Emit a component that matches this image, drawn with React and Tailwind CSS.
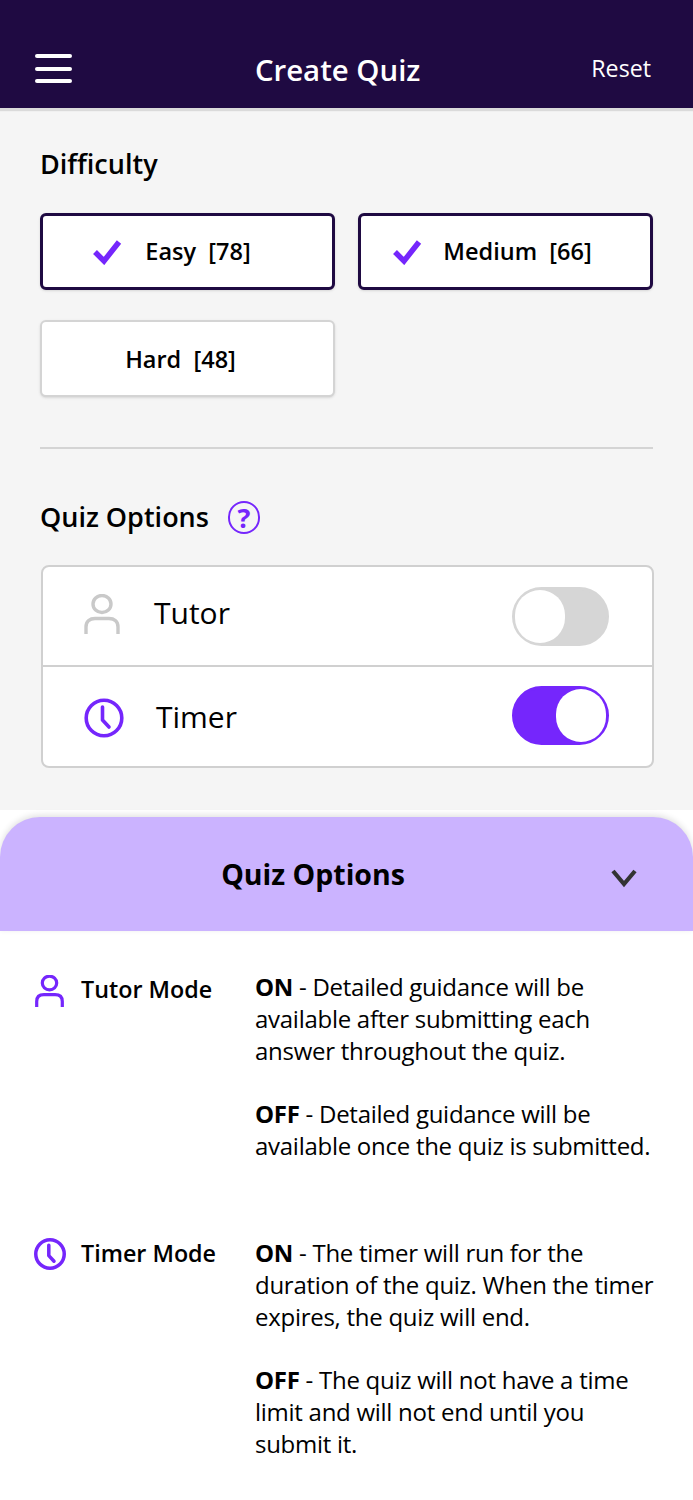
import React from "react";

const Check = () => (
  <svg width="30" height="26" viewBox="0 0 30 26" fill="none" className="shrink-0">
    <path d="M3 13 L12 22 L27 3" stroke="#7526fc" strokeWidth="5.5" strokeLinejoin="miter" />
  </svg>
);

const Person = ({ color, w = 36, h = 40, sw = 3.4 }) => (
  <svg width={w} height={h} viewBox="0 0 36 40" fill="none" className="shrink-0">
    <ellipse cx="18" cy="10" rx="9" ry="8.5" stroke={color} strokeWidth={sw} />
    <path d="M2 40 V33 C2 27 6 24.5 11 24.5 H25 C30 24.5 34 27 34 33 V40" stroke={color} strokeWidth={sw} />
  </svg>
);

const Clock = ({ size = 40, sw = 3.6 }) => (
  <svg width={size} height={size} viewBox="0 0 40 40" fill="none" className="shrink-0">
    <circle cx="20" cy="20" r="17.8" stroke="#7526fc" strokeWidth={sw} />
    <path d="M18.5 9 V22 L25 29" stroke="#7526fc" strokeWidth={sw} strokeLinecap="round" strokeLinejoin="round" />
  </svg>
);

const Option = ({ children, on }) => (
  <div
    className={
      "h-[77px] w-[295px] rounded-[6px] bg-white flex items-center justify-center " +
      (on ? "border-[3px] border-[#1f0a42] shadow-sm" : "border-2 border-[#d4d4d4] shadow-sm")
    }
  >
    {children}
  </div>
);

const Label = ({ name, n }) => (
  <span className="text-[23.5px] font-semibold text-black whitespace-pre">
    {name}
    {"  "}[{n}]
  </span>
);

export default function App() {
  return (
    <div className="w-[693px] h-[1500px] bg-white overflow-hidden font-['Open_Sans',sans-serif] text-black">
      <header className="h-[108px] bg-[#1f0a42] flex items-end justify-between pl-[35px] pr-[42px] pb-[20px] relative z-10 shadow-[0_3px_1px_#dadada]">
        <div className="flex flex-col gap-[8.5px] mb-[5px] w-[37px]">
          <div className="h-[4px] rounded-full bg-white" />
          <div className="h-[4px] rounded-full bg-white" />
          <div className="h-[4px] rounded-full bg-white" />
        </div>
        <div className="text-[29.4px] leading-[38px] font-semibold text-white -mb-[1px] ml-[12px]">Create Quiz</div>
        <div className="text-[23.2px] leading-[32px] text-white mb-[4px]">Reset</div>
      </header>

      <main className="h-[702px] bg-[#f5f5f5] pl-[40px] pr-[40px] pt-[38px]">
        <h2 className="text-[27px] leading-[36px] font-semibold">Difficulty</h2>
        <div className="grid grid-cols-[295px_295px] gap-x-[23px] gap-y-[30px] mt-[31px]">
          <Option on>
            <div className="flex items-center gap-[23px] -ml-[32px]">
              <Check />
              <Label name="Easy" n="78" />
            </div>
          </Option>
          <Option on>
            <div className="flex items-center gap-[21px] -ml-[27px]">
              <Check />
              <Label name="Medium" n="66" />
            </div>
          </Option>
          <Option>
            <div className="-ml-[14px] mt-[2px]">
              <Label name="Hard" n="48" />
            </div>
          </Option>
        </div>
        <div className="h-[2px] bg-[#d4d4d4] mt-[50px]" />
        <div className="flex items-center gap-[19px] mt-[50px]">
          <h2 className="text-[27px] leading-[36px] font-semibold">Quiz Options</h2>
          <div className="w-[32px] h-[33px] rounded-full border-[2.5px] border-[#7526fc] flex items-center justify-center text-[#7526fc] text-[27px] font-bold leading-none">
            ?
          </div>
        </div>
        <div className="mt-[30px] ml-[1px] w-[613px] h-[203px] bg-white border-2 border-[#d0d0d0] rounded-[8px] flex flex-col">
          <div className="h-[100px] border-b-2 border-[#d0d0d0] flex items-center pl-[41px] pr-[43px]">
            <div className="-mt-[4px]"><Person color="#c9c9c9" /></div>
            <span className="text-[30px] leading-[40px] ml-[34px] -mt-[6px]">Tutor</span>
            <div className="ml-auto w-[97px] h-[59px] rounded-full bg-[#d6d6d6] border-[3px] border-[#d6d6d6] flex justify-start mt-[1px]">
              <div className="w-[50px] h-[53px] rounded-full bg-white" />
            </div>
          </div>
          <div className="flex-1 flex items-center pl-[41px] pr-[43px]">
            <div className="mt-[2px]"><Clock /></div>
            <span className="text-[30px] leading-[40px] ml-[32px]">Timer</span>
            <div className="ml-auto w-[97px] h-[59px] rounded-full bg-[#7526fc] border-[3px] border-[#7526fc] flex justify-end -mt-[3px]">
              <div className="w-[50px] h-[53px] rounded-full bg-white" />
            </div>
          </div>
        </div>
      </main>

      <section className="mt-[7px] h-[114px] rounded-t-[40px] bg-[#cbb3ff] shadow-[0_-2px_6px_rgba(0,0,0,0.12)] flex items-center relative">
        <div className="w-[626px] text-center text-[28.5px] leading-[38px] font-bold">Quiz Options</div>
        <svg width="28" height="20" viewBox="0 0 28 20" fill="none" className="ml-[-16px] mt-[7px]">
          <path d="M3 3 L14 16 L25 3" stroke="#333333" strokeWidth="4.2" />
        </svg>
      </section>

      <section className="grid grid-cols-[255px_1fr] pt-[40px] text-[24px] leading-[31.8px] tracking-[-0.27px]">
        <div className="flex items-start pl-[35px] gap-[17px]">
          <div className="mt-[4px]"><Person color="#7526fc" w={29} h={32} sw={4} /></div>
          <span className="font-semibold whitespace-nowrap text-[23.3px] mt-[3px] tracking-normal">Tutor Mode</span>
        </div>
        <div className="pr-[36px]">
          <p><b>ON</b> - Detailed guidance will be available after submitting each answer throughout the quiz.</p>
          <p className="mt-[32px]"><b>OFF</b> - Detailed guidance will be available once the quiz is submitted.</p>
        </div>
        <div className="flex items-start pl-[34px] gap-[15px] mt-[75px]">
          <div className="mt-[1px]"><Clock size={32} sw={4.4} /></div>
          <span className="font-semibold whitespace-nowrap text-[23.3px] mt-[1px] tracking-normal">Timer Mode</span>
        </div>
        <div className="pr-[36px] mt-[75px]">
          <p><b>ON</b> - The timer will run for the duration of the quiz. When the timer expires, the quiz will end.</p>
          <p className="mt-[32px]"><b>OFF</b> - The quiz will not have a time limit and will not end until you submit it.</p>
        </div>
      </section>
    </div>
  );
}
